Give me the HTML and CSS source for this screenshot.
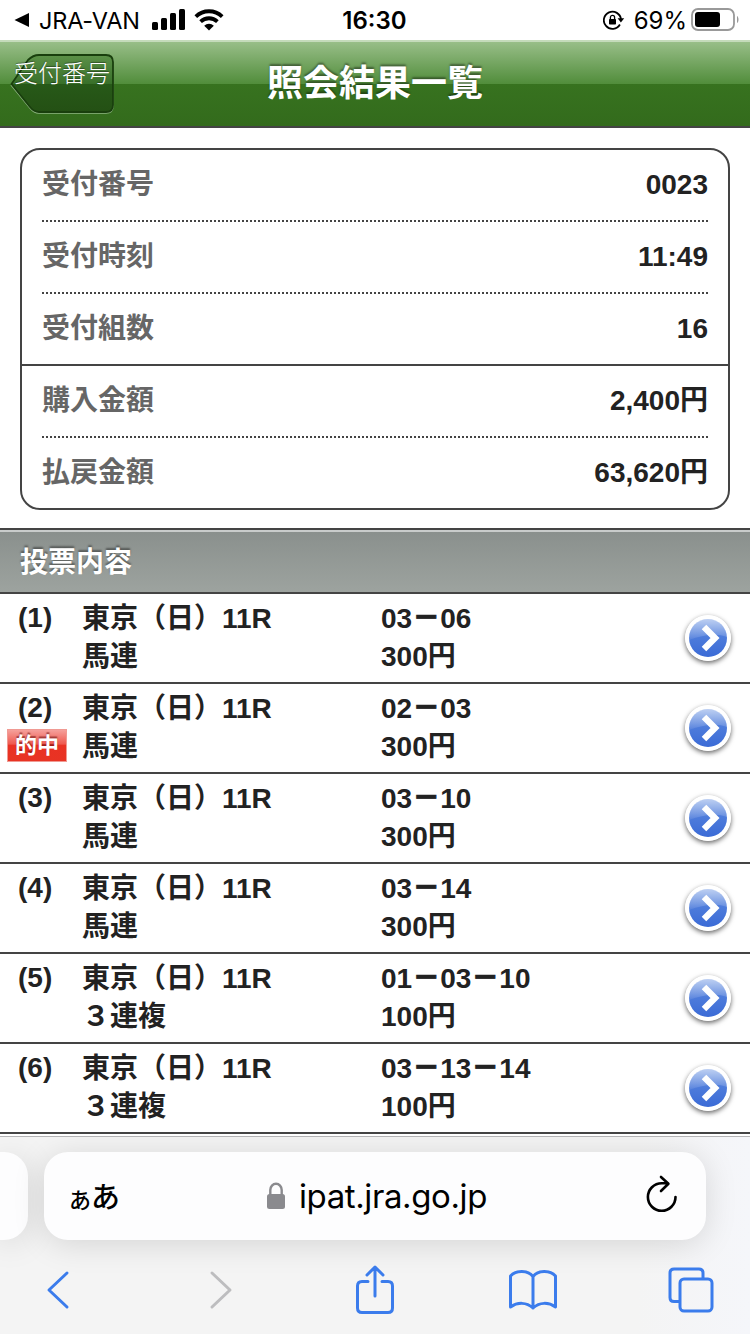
FILE: index.html
```html
<!DOCTYPE html>
<html lang="ja">
  <head>
    <meta charset="UTF-8" />
    <meta name="viewport" content="width=device-width, initial-scale=1.0" />
    <title>照会結果一覧</title>
    <link rel="stylesheet" href="styles.css">
  </head>
  <body>
    <!-- icons used more than once -->
    <svg class="defs" width="0" height="0">
      <defs>
        <linearGradient id="ball" x1="0" y1="0" x2="0" y2="1">
          <stop offset="0" stop-color="#5f8be0" />
          <stop offset="1" stop-color="#3b6bd6" />
        </linearGradient>
        <linearGradient id="gloss" x1="0" y1="0" x2="0" y2="1">
          <stop offset="0" stop-color="#fff" stop-opacity="0.6" />
          <stop offset="1" stop-color="#fff" stop-opacity="0.06" />
        </linearGradient>
        <symbol id="arrow" viewBox="0 0 46 46">
          <circle cx="23" cy="23" r="23" fill="#fff" />
          <circle cx="23" cy="23" r="19" fill="url(#ball)" />
          <path d="M4 23a19 19 0 0 1 38-1C31 18 18 20 4 25z" fill="url(#gloss)" />
          <path d="M19 12l11 11-11 11" fill="none" stroke="#fff" stroke-width="6.400" />
        </symbol>
      </defs>
    </svg>

    <div class="status">
      <div class="status-left">
        <svg width="16" height="16" viewBox="0 0 16 16"><path d="M0.5 8L15 1v14z" /></svg>
        <span class="app">JRA-VAN</span>
        <svg class="signal" width="34" height="22" viewBox="0 0 34 22">
          <rect x="0" y="13" width="6" height="8" rx="1.5" />
          <rect x="9" y="9" width="6" height="12" rx="1.5" />
          <rect x="18" y="4" width="6" height="17" rx="1.5" />
          <rect x="27" y="0" width="6" height="21" rx="1.5" />
        </svg>
        <svg class="wifi" width="30" height="22" viewBox="0 0 30 22">
          <path d="M1.8 7.6a19 19 0 0 1 26.4 0M6.6 12.6a12.2 12.2 0 0 1 16.8 0" fill="none" stroke="#000" stroke-width="3.8" />
          <path d="M15 21.5l-4.8-4.8a7 7 0 0 1 9.6 0z" />
        </svg>
      </div>
      <div class="clock">16:30</div>
      <div class="status-right">
        <svg width="22" height="20" viewBox="0 0 22 20">
          <path d="M16.9 14.5A8.6 8.6 0 1 1 18 9.5" fill="none" stroke="#000" stroke-width="1.8" />
          <path d="M14.6 8.3h6.6l-3.3 4.2z" />
          <rect x="6" y="9" width="7" height="5.6" rx="0.8" />
          <path d="M7.4 9.5V7.4a2.1 2.1 0 0 1 4.2 0v2.1" fill="none" stroke="#000" stroke-width="1.3" />
        </svg>
        <span class="percent">69%</span>
        <svg class="battery" width="48" height="24" viewBox="0 0 48 24">
          <rect x="1" y="1" width="42" height="21" rx="6" fill="none" stroke="#999" stroke-width="1.8" />
          <rect x="4" y="4" width="25" height="15" rx="3" />
          <path d="M46 8c2 1 2 6 0 7z" fill="#999" />
        </svg>
      </div>
    </div>

    <header class="header">
      <a class="back" href="#">
        <svg class="back-shape" width="106" height="62" viewBox="0 0 106 62">
          <defs>
            <linearGradient id="backfill" x1="0" y1="0" x2="0" y2="1">
              <stop offset="0" stop-color="#5c9148" />
              <stop offset="0.5" stop-color="#39702a" />
              <stop offset="0.51" stop-color="#275918" />
              <stop offset="1" stop-color="#245014" />
            </linearGradient>
          </defs>
          <path d="M1.500 31.500L18 7q5-5 11-5h67q7 0 7 7v43q0 7-7 7H29q-5 0-9-5z" fill="none" stroke="#8fb583" stroke-width="1.5" />
          <path d="M1.500 30L18 6q5-5 11-5h67q7 0 7 7v43q0 7-7 7H29q-5 0-9-5z" fill="url(#backfill)" stroke="#193f0d" stroke-width="1.8" />
        </svg>
        <span class="back-text">受付番号</span>
      </a>
      <h1>照会結果一覧</h1>
    </header>

    <div class="summary">
      <div class="group">
        <div class="item"><span class="name">受付番号</span><span>0023</span></div>
        <div class="item"><span class="name">受付時刻</span><span>11:49</span></div>
        <div class="item"><span class="name">受付組数</span><span>16</span></div>
      </div>
      <div class="group">
        <div class="item"><span class="name">購入金額</span><span>2,400円</span></div>
        <div class="item"><span class="name">払戻金額</span><span>63,620円</span></div>
      </div>
    </div>

    <h2>投票内容</h2>

    <div class="bets">
      <div class="bet">
        <div class="no">(1)</div>
        <div class="race">東京（日）11R<br>馬連</div>
        <div class="pick">03<b>－</b>06<br>300円</div>
        <svg class="go"><use href="#arrow" /></svg>
      </div>
      <div class="bet">
        <div class="no">(2)<span class="hit">的中</span></div>
        <div class="race">東京（日）11R<br>馬連</div>
        <div class="pick">02<b>－</b>03<br>300円</div>
        <svg class="go"><use href="#arrow" /></svg>
      </div>
      <div class="bet">
        <div class="no">(3)</div>
        <div class="race">東京（日）11R<br>馬連</div>
        <div class="pick">03<b>－</b>10<br>300円</div>
        <svg class="go"><use href="#arrow" /></svg>
      </div>
      <div class="bet">
        <div class="no">(4)</div>
        <div class="race">東京（日）11R<br>馬連</div>
        <div class="pick">03<b>－</b>14<br>300円</div>
        <svg class="go"><use href="#arrow" /></svg>
      </div>
      <div class="bet">
        <div class="no">(5)</div>
        <div class="race">東京（日）11R<br>３連複</div>
        <div class="pick">01<b>－</b>03<b>－</b>10<br>100円</div>
        <svg class="go"><use href="#arrow" /></svg>
      </div>
      <div class="bet">
        <div class="no">(6)</div>
        <div class="race">東京（日）11R<br>３連複</div>
        <div class="pick">03<b>－</b>13<b>－</b>14<br>100円</div>
        <svg class="go"><use href="#arrow" /></svg>
      </div>
    </div>

    <div class="browser">
      <div class="tabs">
        <div class="prev-tab"></div>
        <div class="address">
          <div class="reader"><small>あ</small>あ</div>
          <div class="url">
            <svg width="20" height="28" viewBox="0 0 20 28">
              <rect x="1" y="12" width="18" height="15" rx="2.5" fill="#8a8a8e" />
              <path d="M4.3 13V8a5.7 6.2 0 0 1 11.4 0v5" fill="none" stroke="#8a8a8e" stroke-width="2.4" />
            </svg>
            <span>ipat.jra.go.jp</span>
          </div>
          <svg class="reload" width="32" height="38" viewBox="0 0 32 38">
            <path d="M29.5 22A13.8 13.8 0 1 1 15.7 8.2H22M15 2l7.4 6.8L15 16" fill="none" stroke="#000" stroke-width="2.6" stroke-linecap="round" stroke-linejoin="round" />
          </svg>
        </div>
      </div>
      <div class="tools">
        <svg width="24" height="40" viewBox="0 0 24 40"><path d="M20 3L2 20l18 17" /></svg>
        <svg class="off" width="24" height="40" viewBox="0 0 24 40"><path d="M7 3l18 17L7 37" /></svg>
        <svg width="40" height="50" viewBox="0 0 40 50">
          <path d="M13 16.5H7q-4.500 0-4.500 4.500v22q0 4.500 4.500 4.500h26q4.500 0 4.500-4.500V21q0-4.500-4.500-4.500h-6M20 31V2.500M12 10l8-8 8 8" />
        </svg>
        <svg width="50" height="42" viewBox="0 0 50 42">
          <path d="M25 7.500C20 1 8 1 2.500 7v31c7-5 16-5 22.500 1 6.500-6 15.500-6 22.500-1V7C42 1 30 1 25 7.500zV39" />
        </svg>
        <svg width="46" height="46" viewBox="0 0 46 46">
          <path d="M11.500 34.500H6q-4 0-4-4V6q0-4 4-4h25q4 0 4 4v5.500" />
          <rect x="12" y="12" width="32" height="32" rx="4" />
        </svg>
      </div>
    </div>
  </body>
</html>
```
FILE: styles.css
```css
* {
  box-sizing: border-box;
}

body {
  margin: 0;
  width: 750px;
  height: 1334px;
  overflow: hidden;
  background: #fff;
  color: #222;
  font-family: "Liberation Sans", "Noto Sans CJK JP", sans-serif;
  font-size: 28px;
  font-weight: bold;
}

svg {
  display: block;
  flex: none;
}

.defs {
  position: absolute;
}

/* status bar */
.status {
  display: grid;
  grid-template-columns: 1fr 100px 1fr;
  align-items: center;
  height: 40px;
  padding: 0 11px 0 14px;
  color: #000;
  font-family: Inter, sans-serif;
  font-size: 24px;
  font-weight: 400;
}

.status-left,
.status-right {
  display: flex;
  align-items: center;
}

.status-right {
  justify-content: flex-end;
}

.app {
  width: 102px;
  margin: 0 11px 0 9px;
  font-size: 23.5px;
  letter-spacing: -0.2px;
  white-space: nowrap;
}

.signal,
.wifi {
  margin-top: -1px;
}

.wifi {
  margin-left: 8px;
}

.clock {
  margin-left: -4px;
  font-weight: 600;
  text-align: center;
}

.percent {
  margin: 0 4px 0 9px;
}

/* title bar */
.header {
  position: relative;
  height: 88px;
  border-top: 2px solid #c5dbbb;
  border-bottom: 2px solid #444;
  background: linear-gradient(#98be88, #518d3b 50%, #37721f 50%, #336b1c);
}

.header h1 {
  margin: 0;
  color: #fff;
  font-size: 36px;
  line-height: 84px;
  text-align: center;
  text-shadow: 0 -2px 2px rgba(0, 0, 0, 0.4);
}

.back {
  position: absolute;
  left: 10px;
  top: 12px;
  color: #fff;
  text-decoration: none;
}

.back-text {
  position: absolute;
  left: 4px;
  top: 0;
  font-size: 24px;
  font-weight: 300;
  font-family: "Noto Sans CJK JP", sans-serif;
  line-height: 36px;
  white-space: nowrap;
  text-shadow: 0 -1px 1px rgba(0, 0, 0, 0.4);
}

/* receipt summary */
.summary {
  margin: 20px;
  margin-bottom: 18px;
  border: 2px solid #444;
  border-radius: 20px;
}

.group {
  padding: 0 20px;
}

.group + .group {
  border-top: 2px solid #444;
}

.item {
  display: flex;
  justify-content: space-between;
  height: 70px;
  line-height: 70px;
}

.item + .item {
  height: 72px;
  border-top: 2px dotted #444;
}

.name {
  color: #666;
}

h2 {
  height: 66px;
  margin: 0;
  padding-left: 20px;
  border-top: 2px solid #444;
  border-bottom: 2px solid #444;
  background: linear-gradient(#c9cccb 2px, #8a908d 2px, #9da39f);
  color: #fff;
  font-size: 28px;
  line-height: 66px;
  text-shadow: 0 -2px 2px rgba(0, 0, 0, 0.4);
}

/* bet list */
.bet {
  display: grid;
  grid-template-columns: 82px 299px 1fr 46px;
  height: 90px;
  padding: 5px 19px 0 0;
  border-bottom: 2px solid #444;
  line-height: 38px;
}

.race,
.pick {
  padding-top: 1px;
}

.pick b {
  -webkit-text-stroke: 0.6px #222;
}

.no {
  padding-left: 18px;
}

.hit {
  display: block;
  width: 60px;
  height: 33px;
  margin-left: -11px;
  margin-top: 2px;
  border: 1px solid #f09a93;
  background: linear-gradient(#f5a09b, #ef5a50 45%, #e93224 50%, #e83323);
  color: #fff;
  font-size: 22px;
  line-height: 32px;
  text-align: center;
  text-shadow: 0 -2px 1px rgba(90, 0, 0, 0.5);
}

.go {
  width: 46px;
  height: 46px;
  margin-top: 16px;
  border-radius: 50%;
  box-shadow: 0 2px 5px rgba(0, 0, 0, 0.6);
}

/* browser bar */
.browser {
  height: 198px;
  margin-top: 2px;
  padding-top: 15px;
  overflow: hidden;
  border-top: 1px solid #b4b4b6;
  background: linear-gradient(90deg, #f4f4f4 85%, #f5f6fa);
}

.tabs {
  display: flex;
  gap: 16px;
  height: 88px;
}

.prev-tab,
.address {
  background: #fdfdfe;
  box-shadow: 0 4px 32px rgba(0, 0, 0, 0.13);
}

.prev-tab {
  width: 28px;
  border-radius: 0 24px 24px 0;
}

.address {
  display: grid;
  grid-template-columns: 197px 1fr 32px;
  align-items: center;
  width: 662px;
  padding: 0 28px 0 25px;
  border-radius: 24px;
  color: #000;
  font-weight: 400;
}

.reader {
  font-family: "Noto Sans CJK JP", sans-serif;
  font-size: 29px;
  font-weight: 500;
  line-height: 40px;
}

.reader small {
  font-size: 22px;
}

.url {
  display: flex;
  align-items: center;
  gap: 13px;
  font-family: Inter, sans-serif;
  font-size: 33px;
  letter-spacing: -0.4px;
}

.reload {
  margin-top: -4px;
}

.tools {
  display: grid;
  grid-template-columns: repeat(5, 158px);
  place-items: center;
  height: 60px;
  margin: 20px 0 0 -20px;
}

.tools svg {
  overflow: visible;
  fill: none;
  stroke: #3b7cec;
  stroke-width: 3;
  stroke-linecap: round;
  stroke-linejoin: round;
}

.tools .off {
  stroke: #bdbdbf;
}
```
